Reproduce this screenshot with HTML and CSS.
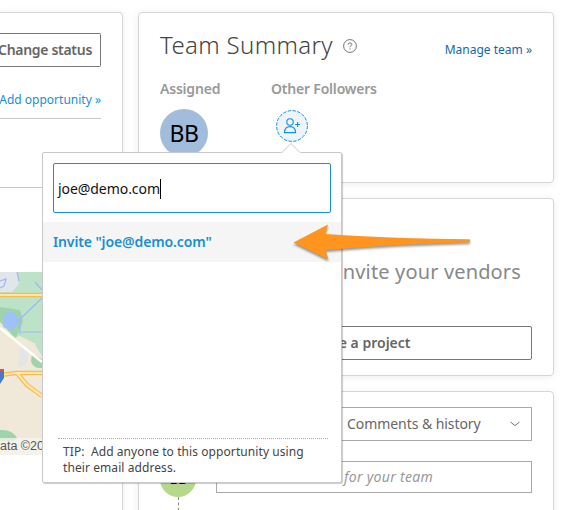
FILE: index.html
```html
<!DOCTYPE html>
<html lang="en">
<head>
<meta charset="utf-8">
<title>Team Summary</title>
<link rel="stylesheet" href="styles.css">
</head>
<body>
<main class="page">
  <section class="card details">
    <button class="button status">Change status</button>
    <a class="add-link"><span>Add opportunity »</span></a>
    <div class="divider"></div>
    <div class="map">
      <svg width="101" height="183" viewBox="0 0 101 183">
        <rect width="101" height="183" fill="#f0e8d8"/>
        <path d="M0 0H101V96H42L34 90 30 80 36 72 20 64 12 66 0 56Z" fill="#bce2c7"/>
        <path d="M0 46 12 58 17 66 36 74 42 84V110H0Z" fill="#f0e8d8"/>
        <path d="M0 35 20 38 23 49 16 66 0 56Z" fill="#9fd3ab"/>
        <path d="M0 50 15 66 12 70 0 64Z" fill="#f0e8d8"/>
        <path d="M32 82 42 87V96Q33 97 31 89Z" fill="#9fd3ab"/>
        <path d="M20 74 30 77 26 92 18 96Z" fill="#e2e5e9"/>
        <path d="M0 0H17L19 12 12 20H0Z" fill="#e2e5e9"/>
        <path d="M4 42 12 39 18 45 17 54 11 58 3 55Z" fill="#9fc1fa"/>
        <path d="M0 9 6 7 4 14 0 16M17 0 19 9M17 50 42 26M20 48 20 62M35 10 42 18M20 60H42" fill="none" stroke="#9fb9f4" stroke-width="1.2"/>
        <path d="M0 56 42 90" stroke="#fffef8" stroke-width="2.5"/>
        <path d="M0 23H101M0 103 16 101H101M17 101 27 113 42 124" fill="none" stroke="#f3bd56" stroke-width="4.500"/>
        <path d="M0 23H101M0 103 16 101H101M17 101 27 113 42 124" fill="none" stroke="#ffe6a5" stroke-width="2.2"/>
        <path d="M0 97 4 98 4 106 0 112Z" fill="#477bc7"/>
        <path d="M0 97H4V99H0Z" fill="#db5252"/>
        <path d="M0 158Q12 157 17 166L14 169H0Z" fill="#9fd3ab"/>
      </svg>
      <span class="map-credit">ata ©2020</span>
    </div>
  </section>
  <div class="column">
    <section class="card summary">
      <header class="summary-head">
        <h1>Team Summary</h1>
        <svg class="help" width="14" height="14" viewBox="0 0 14 14" fill="none" stroke="#666">
          <circle cx="7" cy="7" r="6.4" stroke-width=".9"/>
          <path d="M5.2 5.6Q5.2 3.9 7 3.9T8.8 5.5Q8.8 6.4 7.8 6.8 7 7.1 7 8.3M7 9.3V10.4" stroke-width=".9"/>
        </svg>
        <a class="manage">Manage team »</a>
      </header>
      <div class="people">
        <div class="person-group assigned">
          <h2>Assigned</h2>
          <div class="avatar">BB</div>
        </div>
        <div class="person-group">
          <h2 class="others">Other Followers</h2>
          <svg class="add-user" width="32" height="32" viewBox="0 0 32 32" fill="none" stroke="#1690d4">
            <circle cx="16" cy="16" r="15.4" fill="#edf4fb" stroke-dasharray="3.4 1.44"/>
            <circle cx="14" cy="12" r="3.2" stroke-width="1.1"/>
            <path d="M8.5 22.6Q8.5 16.6 14 16.6T19.5 22.6ZM19.2 14.5H24M21.6 12.1V16.9" stroke-width="1.1"/>
          </svg>
        </div>
      </div>
    </section>
    <section class="card vendors">
      <p class="vendor-title">Invite your vendors</p>
      <button class="button project">Create a project</button>
    </section>
    <section class="card activity">
      <div class="select"><span>Comments &amp; history</span>
        <svg width="12" height="8" viewBox="0 0 12 8" fill="none" stroke="#777"><path d="M1.5 2 6 5.6 10.5 2"/></svg>
      </div>
      <div class="comment">
        <div class="thread"><div class="avatar small">BB</div><div class="thread-line"></div></div>
        <div class="note"><span>for your team</span></div>
      </div>
    </section>
  </div>
</main>
<div class="popup">
  <svg class="notch" width="20" height="11" viewBox="0 0 20 11"><path d="M0 10.5H1.5L10 1.5 18.5 10.5H20V11H0Z" fill="#fff"/><path d="M1 10.5 10 1.5 19 10.5" fill="none" stroke="#c8c9ca"/></svg>
  <div class="field"><span>joe@demo.com</span><i class="caret"></i></div>
  <div class="invite"><span>Invite "joe@demo.com"</span></div>
  <div class="tip"><div class="tip-first">TIP:&nbsp; Add anyone to this opportunity using</div><div class="tip-second">their email address.</div></div>
</div>
<svg class="arrow" width="184" height="44" viewBox="0 0 184 44"><path d="M3.5 22.5 38 4.5 35.5 14Q105 19 179.500 19.200Q181 20.500 179.500 22.200Q105 24 35.500 30L38.500 39.500Z" fill="#ff951e"/></svg>
</body>
</html>
```

FILE: styles.css
```css
* { box-sizing: border-box; }
body {
  margin: 0;
  width: 565px;
  height: 510px;
  overflow: hidden;
  position: relative;
  background: #fff;
  font-family: "Noto Sans", sans-serif;
  font-size: 14px;
  line-height: 20px;
}
h1, h2, p { margin: 0; font-weight: 400; }
span, a { white-space: nowrap; }
.page {
  display: grid;
  grid-template-columns: 123px 416px;
  gap: 15px;
  height: 510px;
  padding-top: 12px;
  overflow: hidden;
}
.card {
  border: 1px solid #d5d6d7;
  border-radius: 4px;
  background: #fff;
  box-shadow: 0 1px 8px rgba(0, 0, 0, .07);
}
.column { display: flex; flex-direction: column; gap: 15px; min-width: 0; }
.details {
  display: flex;
  flex-direction: column;
  height: 520px;
  padding-top: 20px;
  border-left: 0;
  border-top-left-radius: 0;
}
.button {
  display: flex;
  align-items: center;
  height: 34px;
  border: 1px solid #777;
  border-radius: 2px;
  background: #fff;
  color: #666;
  font: 600 14px/20px "Noto Sans", sans-serif;
  white-space: nowrap;
}
.status {
  width: 101px;
  justify-content: flex-end;
  padding: 0 8px 0 0;
  border-left: 0;
  border-radius: 0 2px 2px 0;
  letter-spacing: -.3px;
}
.add-link {
  display: flex;
  justify-content: flex-end;
  width: 101px;
  height: 52px;
  padding-top: 23px;
  border-bottom: 1px solid #c7c7c7;
  color: #1690d4;
  font-size: 12px;
}
.divider { height: 69px; border-bottom: 1px solid #c7c7c7; }
.map { height: 183px; width: 101px; margin-top: 84px; display: grid; }
.map svg, .map-credit { grid-area: 1 / 1; }
.map-credit {
  align-self: end;
  height: 17px;
  background: rgba(245, 245, 240, .75);
  color: #555;
  font: 12.5px/17px "Liberation Sans", sans-serif;
}
.summary { height: 171px; padding: 18px 21px; }
.summary-head { display: flex; height: 30px; align-items: center; }
h1 {
  margin-top: -2px;
  color: #444;
  font-size: 24px;
  line-height: 30px;
  font-weight: 300;
  letter-spacing: .35px;
  white-space: nowrap;
}
.help { margin: 0 0 0 10px; }
.manage { margin: 8px 0 0 auto; color: #1268a5; font-size: 12px; }
.people { display: flex; margin-top: 18px; }
.person-group { display: flex; flex-direction: column; }
.assigned { width: 111px; }
h2 { color: #999; font-size: 14px; font-weight: 600; line-height: 20px; white-space: nowrap; letter-spacing: -.2px; }
.avatar {
  display: flex;
  align-items: center;
  justify-content: center;
  width: 48px;
  height: 48px;
  margin-top: 10px;
  border-radius: 50%;
  background: #a2bcdb;
  color: #000;
  font-size: 23px;
  letter-spacing: -.5px;
}
.add-user { margin: 11px 0 0 5px; }
.vendors { height: 178px; padding: 59px 21px 0; }
.vendor-title { height: 28px; padding-right: 11px; color: #888; font-size: 20px; line-height: 28px; letter-spacing: .15px; text-align: right; }
.project { width: 372px; margin-top: 40px; padding-left: 141px; }
.activity { height: 180px; padding: 15px 21px; }
.select {
  display: flex;
  align-items: center;
  justify-content: space-between;
  width: 316px;
  height: 34px;
  margin-left: 56px;
  padding: 0 10px 0 130px;
  border: 1px solid #aaa;
  color: #666;
  letter-spacing: -.06px;
}
.comment { display: flex; margin-top: 20px; }
.thread { width: 56px; }
.small { width: 36px; height: 36px; margin-top: 0; background: #b6d88b; font-size: 14px; }
.thread-line { width: 1px; height: 30px; margin-left: 18px; border-left: 1px dashed #888; }
.note {
  width: 316px;
  height: 32px;
  padding: 5px 0 0 127px;
  border: 1px solid #aaa;
  color: #999;
  font-style: italic;
  letter-spacing: .3px;
}
.popup {
  position: absolute;
  left: 42px;
  top: 152px;
  width: 300px;
  height: 331px;
  padding-top: 10px;
  border: 1px solid #c8c9ca;
  border-radius: 2px;
  background: #fff;
  box-shadow: 1px 1px 1px rgba(0, 0, 0, .2);
}
.notch { position: absolute; left: 238px; top: -11px; }
.field {
  display: flex;
  align-items: center;
  width: 278px;
  height: 50px;
  margin-left: 10px;
  padding: 2px 0 0 4px;
  border: 1px solid #1690d4;
  border-radius: 2px;
  color: #111;
  letter-spacing: -.06px;
}
.caret { width: 1px; height: 20px; background: #000; }
.invite {
  height: 40px;
  margin-top: 9px;
  padding: 10px;
  background: #f5f5f5;
  color: #1690d4;
  font-weight: 600;
  letter-spacing: -.12px;
}
.tip {
  width: 270px;
  margin: 176px 0 0 15px;
  padding: 5px 0 0 5px;
  border-top: 1px dotted #aaa;
  color: #444;
  font-size: 12px;
  line-height: 16px;
  letter-spacing: .08px;
  white-space: nowrap;
}
.arrow { position: absolute; left: 290px; top: 220px; filter: drop-shadow(0 2px 1px rgba(0, 0, 0, .4)); }
```
